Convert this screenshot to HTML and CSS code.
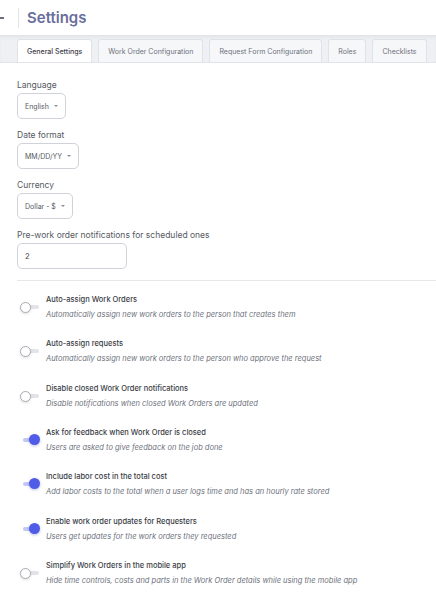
FILE: index.html
```html
<!DOCTYPE html>
<html lang="en">
<head>
    <meta charset="UTF-8">
    <meta name="viewport" content="width=device-width, initial-scale=1.0">
    <title>Settings</title>
    <link rel="stylesheet" href="styles.css">
</head>
<body>
    <!-- Page header -->
    <header class="page-header">
        <span class="back-arrow"></span>
        <span class="header-divider"></span>
        <h1 class="page-title">Settings</h1>
    </header>

    <!-- Tabs -->
    <nav class="tab-bar">
        <div class="tab active">General Settings</div>
        <div class="tab">Work Order Configuration</div>
        <div class="tab">Request Form Configuration</div>
        <div class="tab">Roles</div>
        <div class="tab">Checklists</div>
    </nav>

    <main class="settings-body">
        <div class="field">
            <label class="field-label">Language</label>
            <div class="select-box">English <span class="caret"></span></div>
        </div>
        <div class="field">
            <label class="field-label">Date format</label>
            <div class="select-box">MM/DD/YY <span class="caret"></span></div>
        </div>
        <div class="field">
            <label class="field-label">Currency</label>
            <div class="select-box">Dollar - $ <span class="caret"></span></div>
        </div>
        <div class="field">
            <label class="field-label">Pre-work order notifications for scheduled ones</label>
            <div class="text-input">2</div>
        </div>

        <hr class="divider">

        <div class="switch-list">
            <div class="switch-row">
                <span class="switch"></span>
                <div class="switch-text">
                    <div class="switch-title">Auto-assign Work Orders</div>
                    <div class="switch-desc">Automatically assign new work orders to the person that creates them</div>
                </div>
            </div>
            <div class="switch-row">
                <span class="switch"></span>
                <div class="switch-text">
                    <div class="switch-title">Auto-assign requests</div>
                    <div class="switch-desc">Automatically assign new work orders to the person who approve the request</div>
                </div>
            </div>
            <div class="switch-row">
                <span class="switch"></span>
                <div class="switch-text">
                    <div class="switch-title">Disable closed Work Order notifications</div>
                    <div class="switch-desc">Disable notifications when closed Work Orders are updated</div>
                </div>
            </div>
            <div class="switch-row">
                <span class="switch on"></span>
                <div class="switch-text">
                    <div class="switch-title">Ask for feedback when Work Order is closed</div>
                    <div class="switch-desc">Users are asked to give feedback on the job done</div>
                </div>
            </div>
            <div class="switch-row">
                <span class="switch on"></span>
                <div class="switch-text">
                    <div class="switch-title">Include labor cost in the total cost</div>
                    <div class="switch-desc">Add labor costs to the total when a user logs time and has an hourly rate stored</div>
                </div>
            </div>
            <div class="switch-row">
                <span class="switch on"></span>
                <div class="switch-text">
                    <div class="switch-title">Enable work order updates for Requesters</div>
                    <div class="switch-desc">Users get updates for the work orders they requested</div>
                </div>
            </div>
            <div class="switch-row">
                <span class="switch"></span>
                <div class="switch-text">
                    <div class="switch-title">Simplify Work Orders in the mobile app</div>
                    <div class="switch-desc">Hide time controls, costs and parts in the Work Order details while using the mobile app</div>
                </div>
            </div>
        </div>
    </main>
</body>
</html>
```

FILE: styles.css
```css
body {
    margin: 0;
    font-family: Inter, "Noto Sans", Arial, sans-serif;
    background-color: #ffffff;
    color: #3a3d45;
    overflow: hidden;
}

/* Header */
.page-header {
    display: flex;
    align-items: center;
    height: 35px;
    background-color: #ffffff;
}

.back-arrow {
    width: 4px;
    height: 1.5px;
    background-color: #6b6f7c;
    margin-top: 1px;
}

.header-divider {
    width: 1px;
    height: 20px;
    background-color: #e3e4e8;
    margin-left: 14px;
}

.page-title {
    margin: 0 0 0 8px;
    font-size: 15px;
    font-weight: 600;
    color: #6a6e9c;
}

/* Tabs */
.tab-bar {
    display: flex;
    gap: 6px;
    padding: 3px 0 0 17px;
    height: 23px;
    background-color: #eef0f4;
    border-top: 1px solid #e2e4e9;
    box-shadow: inset 0 2px 3px rgba(0, 0, 0, 0.04);
    border-bottom: 1px solid #e2e4e9;
    overflow: hidden;
}

.tab {
    display: flex;
    align-items: center;
    flex-shrink: 0;
    white-space: nowrap;
    padding: 0 9px;
    font-size: 7px;
    color: #6d717c;
    background-color: #f6f7f9;
    border: 1px solid #dfe2e7;
    border-bottom: none;
    border-radius: 3px 3px 0 0;
}

.tab.active {
    background-color: #ffffff;
    color: #3f424a;
    font-weight: 500;
}

/* Form fields */
.settings-body {
    padding: 17px 0 0 17px;
}

.field {
    display: flex;
    flex-direction: column;
    align-items: flex-start;
    margin-bottom: 11px;
}

.field-label {
    font-size: 8.5px;
    color: #555962;
    margin-bottom: 3px;
}

.select-box {
    display: flex;
    align-items: center;
    gap: 5px;
    height: 24px;
    padding: 0 7px;
    font-size: 7px;
    color: #555962;
    border: 1px solid #cfd2d8;
    border-radius: 5px;
}

.caret {
    width: 0;
    height: 0;
    border-left: 2.5px solid transparent;
    border-right: 2.5px solid transparent;
    border-top: 2.5px solid #8a8d96;
}

.text-input {
    display: flex;
    align-items: center;
    width: 94px;
    height: 24px;
    padding: 0 7px;
    font-size: 7.5px;
    color: #3a3d45;
    border: 1px solid #cfd2d8;
    border-radius: 5px;
}

.divider {
    border: none;
    border-top: 1px solid #e6e7ea;
    margin: 7px 0 0 0;
}

/* Switches */
.switch-list {
    display: flex;
    flex-direction: column;
    gap: 14px;
    padding-top: 11px;
}

.switch-row {
    display: flex;
    align-items: center;
    gap: 6px;
    height: 30.3px;
}

.switch {
    position: relative;
    width: 23px;
    height: 12px;
    flex-shrink: 0;
}

.switch::before {
    content: "";
    position: absolute;
    left: 6px;
    top: 4px;
    width: 16px;
    height: 4px;
    border-radius: 2px;
    background-color: #e3e4e8;
}

.switch::after {
    content: "";
    position: absolute;
    left: 3px;
    top: 1px;
    width: 9px;
    height: 9px;
    border-radius: 50%;
    background-color: #ffffff;
    border: 1px solid #a9acb4;
    box-shadow: 0 1px 3px rgba(0, 0, 0, 0.12);
}

.switch.on::before {
    left: 6px;
    background-color: #c3c7f4;
}

.switch.on::after {
    left: 12px;
    top: 0;
    width: 11px;
    height: 11px;
    border: none;
    background-color: #4f5ce8;
    box-shadow: 0 1px 3px rgba(40, 50, 160, 0.3);
}

.switch-text {
    display: flex;
    flex-direction: column;
    gap: 6px;
}

.switch-title {
    font-size: 7.5px;
    font-weight: 500;
    color: #3a3d45;
}

.switch-desc {
    font-size: 7.5px;
    font-style: italic;
    color: #6d717c;
}
```
